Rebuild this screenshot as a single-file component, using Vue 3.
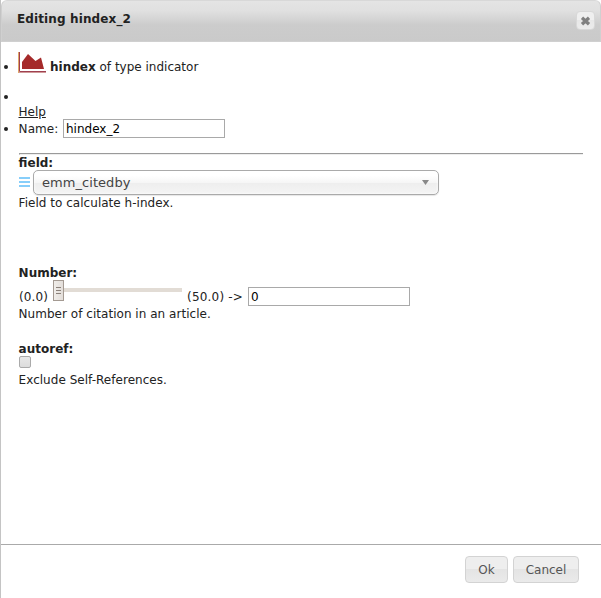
<script setup>
import { ref } from 'vue'

const name = ref('hindex_2')
const field = ref('emm_citedby')
const citations = ref('0')
const excludeSelf = ref(false)
</script>

<template>
  <div class="dialog">
    <header class="titlebar">
      <span class="title">Editing hindex_2</span>
      <button class="close" aria-label="Close">
        <svg width="11" height="10" viewBox="0 0 11 10">
          <path d="M2 1.8 9 8.2M9 1.8 2 8.2" stroke="#808080" stroke-width="3.3" fill="none" />
        </svg>
      </button>
    </header>

    <main class="content">
      <div class="item heading">
        <i class="dot"></i>
        <svg class="chart" width="28" height="21" viewBox="0 0 28 21">
          <path d="M4 17V10L10 2 17.500 9 23 5.500 26 17Z" fill="#a52a2a" />
          <path d="M.5 0V21" stroke="#e0a668" />
          <path d="M1.500 0V19.500H28" stroke="#a04050" fill="none" />
          <path d="M1 20.500H28" stroke="#cf9999" />
        </svg>
        <span><b class="type">hindex</b> <span class="desc">of type indicator</span></span>
      </div>
      <div class="item blank"><i class="dot"></i></div>
      <a class="help">Help</a>
      <div class="item name-row">
        <i class="dot"></i>
        <label>Name:</label>
        <input v-model="name" class="text" />
      </div>

      <hr class="rule" />

      <section class="field">
        <b class="label field-label">field:</b>
        <div class="select-row">
          <svg class="grip" width="11" height="10" viewBox="0 0 11 10">
            <path d="M0 1H11M0 5H11M0 9H11" stroke="#87cefa" stroke-width="2" />
          </svg>
          <div class="select">
            <span>{{ field }}</span>
            <svg class="arrow" width="7" height="5" viewBox="0 0 7 5"><path d="M0 0H7L3.5 5Z" fill="#888" /></svg>
          </div>
        </div>
        <p class="hint field-hint">Field to calculate h-index.</p>
      </section>

      <section class="number">
        <b class="label number-label">Number:</b>
        <div class="slider-row">
          <span class="min">(0.0)</span>
          <div class="slider">
            <div class="thumb"><i></i><i></i><i></i></div>
            <div class="track"></div>
          </div>
          <span class="max">(50.0) -&gt;</span>
          <input v-model="citations" class="text" />
        </div>
        <p class="hint number-hint">Number of citation in an article.</p>
      </section>

      <section class="autoref">
        <b class="label autoref-label">autoref:</b>
        <input v-model="excludeSelf" type="checkbox" class="check" />
        <p class="hint autoref-hint">Exclude Self-References.</p>
      </section>
    </main>

    <footer class="footer">
      <button class="btn ok">Ok</button>
      <button class="btn cancel">Cancel</button>
    </footer>
  </div>
</template>

<style>
body { background: #fff; }
</style>

<style scoped>
* { box-sizing: border-box; }
.dialog {
  display: flex;
  flex-direction: column;
  height: 598px;
  border-left: 1px solid #c4c4c4;
  font: 12px/16px "DejaVu Sans", sans-serif;
  color: #222;
  background: #fff;
  overflow: hidden;
  white-space: nowrap;
}
.titlebar {
  display: flex;
  justify-content: space-between;
  height: 42px;
  padding: 10px 4px 0 15px;
  border: 1px solid #d0d0d0;
  border-top-color: #d8d8d8;
  border-radius: 6px 6px 0 0;
  background: linear-gradient(#e4e4e4, #e0e0e0 25%, #cccccc 60%, #cacaca);
}
.title { font-weight: bold; letter-spacing: .12px; }
.close {
  display: flex;
  align-items: center;
  justify-content: center;
  width: 19px;
  height: 19px;
  margin: 0 1px 0 0;
  padding: 0;
  border: 1px solid #d8d8d8;
  border-radius: 4px;
  background: linear-gradient(#efefef 50%, #e7e7e7 50%, #ececec);
}
.close svg { flex: none; }
.content {
  flex: 1;
  padding: 10px 18px 0 17px;
}
.item { display: flex; align-items: center; margin-left: -14px; }
.dot {
  flex: none;
  width: 4px;
  height: 4px;
  margin-right: 11px;
  border-radius: 50%;
  background: #222;
}
.heading { height: 23px; }
.heading .dot { margin-top: 7px; margin-right: 10px; }
.heading > span { margin: 6px 0 0 4px; }
.chart { display: block; align-self: flex-start; }
.blank { height: 12px; margin-top: 16px; }
.help { display: block; height: 16px; margin-top: 1px; padding-left: .5px; text-decoration: underline; }
.name-row { height: 19px; margin-top: -1px; }
.name-row label { width: 44px; margin-left: -.4px; margin-right: .4px; letter-spacing: .05px; }
.text {
  width: 162px;
  height: 19px;
  padding: 0 2px;
  border: 1px solid #a9a9a9;
  font: inherit;
  color: #000;
  background: #fff;
  outline: none;
}
.name-row .text { padding-left: 2px; }
.rule {
  width: 564px;
  height: 2px;
  margin: 15px 0 0 1px;
  border: 0;
  border-top: 1px solid #9a9a9a;
  border-left: 1px solid #9a9a9a;
  border-bottom: 1px solid #eee;
}
.label { display: block; height: 16px; padding-left: .6px; }
.field-label { margin-bottom: -1px; }
.hint { margin: 0; height: 16px; padding-left: .6px; letter-spacing: .03px; }
.field { height: 110px; }
.select-row { display: flex; align-items: flex-start; height: 25px; }
.grip { margin: 7px 4px 0 1px; }
.select {
  display: flex;
  align-items: center;
  justify-content: space-between;
  width: 406px;
  height: 25px;
  padding: 1px 9px 0 8px;
  border: 1px solid #aaa;
  border-radius: 5px;
  font-size: 13px;
  letter-spacing: .05px;
  color: #444;
  background: linear-gradient(#fff 20%, #f6f6f6 50%, #eee 52%, #f4f4f4);
  box-shadow: 0 0 3px #fff inset, 0 1px 1px rgba(0, 0, 0, .1);
}
.select-row .select { margin-left: -1px; }
.arrow { margin-top: -2px; }
.number { height: 76px; }
.number-label { height: 15px; }
.slider-row { display: flex; height: 26px; align-items: flex-end; }
.min { width: 35px; padding-left: 1px; letter-spacing: .1px; margin-bottom: 1px; }
.slider { display: flex; align-self: flex-start; width: 129px; height: 21px; }
.thumb {
  display: flex;
  flex-direction: column;
  align-items: center;
  gap: 2px;
  width: 11px;
  height: 21px;
  padding-top: 6px;
  border: 1px solid #a49a92;
  background: linear-gradient(90deg, #f0ede9, #e3deda);
}
.thumb i { width: 5px; height: 1px; background: #8b817a; }
.track { flex: 1; height: 4px; margin-top: 8px; background: #e2dcd5; }
.max { width: 61px; margin: 0 0 1px 5px; letter-spacing: .2px; }
.check {
  display: block;
  appearance: none;
  width: 12px;
  height: 12px;
  margin: -1px 0 0 1px;
  border: 1px solid #aaa;
  border-radius: 2px;
  background: linear-gradient(#e8e8e8, #dcdcdc);
}
.autoref-hint { margin-top: 4px; }
.footer {
  display: flex;
  justify-content: flex-end;
  align-items: flex-start;
  gap: 5px;
  height: 54px;
  padding: 11px 22px 0 0;
  border-top: 1px solid #aaa;
}
.btn {
  height: 27px;
  padding: 0;
  border: 1px solid #d3d3d3;
  border-radius: 4px;
  font: inherit;
  color: #555;
  background: linear-gradient(#eeeeee 50%, #e4e4e4 50%, #eaeaea);
}
.ok { width: 43px; }
.cancel { width: 66px; }
</style>
